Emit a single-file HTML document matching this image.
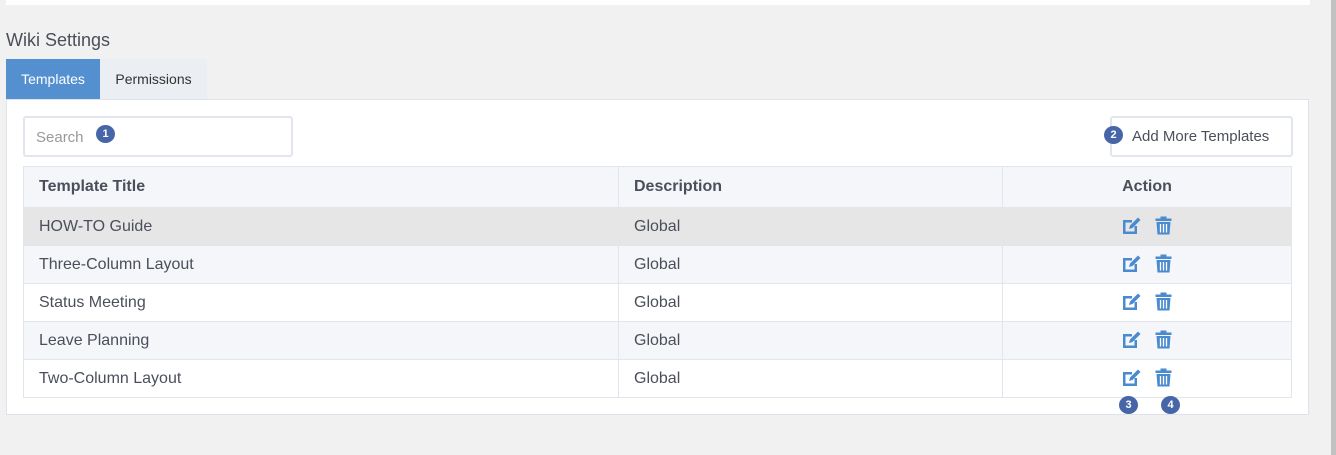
<!DOCTYPE html>
<html><head><style>
body{margin:0;width:1336px;height:455px;background:#f1f1f1;font-family:"Liberation Sans",sans-serif;position:relative;overflow:hidden;color:#4a4f5a}
.abs{position:absolute}
.badge{position:absolute;width:19px;height:18px;border-radius:50%;background:#4766a8;color:#fff;font-size:11px;font-weight:bold;text-align:center;line-height:18px}
table{border-collapse:collapse;position:absolute;left:23px;top:166px;width:1269px;font-size:16px}
td,th{border:1px solid #e1e5ec;padding:0 15px;height:37px;text-align:left}
th{height:40px;background:#f5f6fa;font-weight:bold;color:#4a4f5a}
tr.g td{background:#e6e6e6}
tr.s td{background:#f5f6fa}
td:nth-child(3),th:nth-child(3){text-align:center}
td svg{position:relative;top:-1px}
</style></head><body>
<div class="abs" style="left:6px;top:0;width:1304px;height:5px;background:#fff"></div>
<div class="abs" style="left:1331px;top:0;width:5px;height:455px;background:#c1c1c1"></div>
<div class="abs" style="left:6px;top:30px;font-size:18px;color:#4a4f5a">Wiki Settings</div>
<div class="abs" style="left:6px;top:59px;width:94px;height:40px;background:#5490d0;color:#fff;font-size:14px;line-height:40px;text-align:center">Templates</div>
<div class="abs" style="left:100px;top:59px;width:107px;height:40px;background:#ebeef2;color:#333;font-size:14px;line-height:40px;text-align:center">Permissions</div>
<div class="abs" style="left:6px;top:99px;width:1301px;height:314px;background:#fff;border:1px solid #dde3ea"></div>
<div class="abs" style="left:23px;top:116px;width:266px;height:37px;border:2px solid #e1e5ec;border-radius:3px;background:#fff"><span style="position:absolute;left:11px;top:11px;font-size:15px;color:#999">Search</span></div>
<div class="badge" style="left:96px;top:125px">1</div>
<div class="abs" style="left:1110px;top:116px;width:179px;height:37px;border:2px solid #e1e5ec;border-radius:3px;background:#fff"><span style="position:absolute;left:20px;top:10px;font-size:15px;color:#4a4f5a">Add More Templates</span></div>
<div class="badge" style="left:1104px;top:126px">2</div>
<table>
<tr><th style="width:564px">Template Title</th><th style="width:353px">Description</th><th>Action</th></tr>
<tr class="g"><td>HOW-TO Guide</td><td>Global</td><td>ICONS</td></tr>
<tr class="s"><td>Three-Column Layout</td><td>Global</td><td>ICONS</td></tr>
<tr><td>Status Meeting</td><td>Global</td><td>ICONS</td></tr>
<tr class="s"><td>Leave Planning</td><td>Global</td><td>ICONS</td></tr>
<tr><td>Two-Column Layout</td><td>Global</td><td>ICONS</td></tr>
</table>
<div class="badge" style="left:1119px;top:396px">3</div>
<div class="badge" style="left:1161px;top:396px">4</div>
<script>
var ic='<svg width="19" height="19" viewBox="0 0 19 19" style="vertical-align:middle;margin-right:14px"><path d="M1 4h9v2.5H3.5v9h9V10H15v8H1z" fill="#4a8bd0"/><path d="M7 13l1-3.5 8-8 2.5 2.5-8 8z" fill="#4a8bd0"/></svg><svg width="17" height="19" viewBox="0 0 17 19" style="vertical-align:middle"><path d="M5.5 0.5h6v2h5v2.5H0.5V2.5h5z M1.5 6h14l-1 12.5h-12z" fill="#4a8bd0"/><path d="M5.5 8v8.5M8.5 8v8.5M11.5 8v8.5" stroke="#fff" stroke-width="1.3"/></svg>';
document.querySelectorAll('td').forEach(function(t){if(t.textContent=='ICONS')t.innerHTML=ic;});
</script>
</body></html>
